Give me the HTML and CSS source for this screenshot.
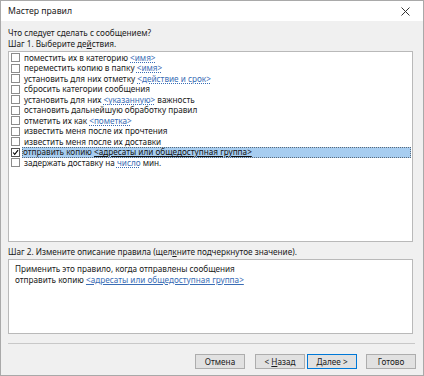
FILE: index.html
```html
<!DOCTYPE html>
<html lang="ru">
<head>
    <meta charset="UTF-8">
    <title>Мастер правил</title>
    <link rel="stylesheet" href="styles.css">
</head>
<body>

<div class="window">
    <!-- Title bar -->
    <div class="titlebar">
        <span class="title">Мастер правил</span>
        <span class="close">
            <svg width="9" height="9" viewBox="0 0 9 9"><path d="M0.5 0.5L8.5 8.5M8.5 0.5L0.5 8.5" stroke="#333" stroke-width="1"/></svg>
        </span>
    </div>

    <div class="content">
        <p class="label">Что следует сделать с сообщением?</p>
        <p class="label">Шаг 1. Выберите де<u>й</u>ствия.</p>

        <!-- Step 1 list -->
        <div class="listbox">
            <div class="row"><span class="box"></span><span class="text">поместить их в категорию <a href="#">&lt;имя&gt;</a></span></div>
            <div class="row"><span class="box"></span><span class="text">переместить копию в папку <a href="#">&lt;имя&gt;</a></span></div>
            <div class="row"><span class="box"></span><span class="text">установить для них отметку <a href="#">&lt;действие и срок&gt;</a></span></div>
            <div class="row"><span class="box"></span><span class="text">сбросить категории сообщения</span></div>
            <div class="row"><span class="box"></span><span class="text">установить для них <a href="#">&lt;указанную&gt;</a> важность</span></div>
            <div class="row"><span class="box"></span><span class="text">остановить дальнейшую обработку правил</span></div>
            <div class="row"><span class="box"></span><span class="text">отметить их как <a href="#">&lt;пометка&gt;</a></span></div>
            <div class="row"><span class="box"></span><span class="text">известить меня после их прочтения</span></div>
            <div class="row"><span class="box"></span><span class="text">известить меня после их доставки</span></div>
            <div class="row checked">
                <span class="box">
                    <svg width="9" height="9" viewBox="0 0 9 9"><path d="M1.5 4.5L3.5 7L7.8 1.5" fill="none" stroke="#000" stroke-width="1.4"/></svg>
                </span>
                <span class="text selected">отправить копию <a href="#">&lt;адресаты или общедоступная группа&gt;</a></span>
            </div>
            <div class="row"><span class="box"></span><span class="text">задержать доставку на <a href="#">число</a> мин.</span></div>
        </div>

        <p class="label step2">Шаг 2. Измените описание правила (щел<u>к</u>ните подчеркнутое значение).</p>

        <!-- Step 2 description -->
        <div class="description">
            <div>Применить это правило, когда отправлены сообщения</div>
            <div>отправить копию <a href="#">&lt;адресаты или общедоступная группа&gt;</a></div>
        </div>

        <div class="separator"></div>

        <div class="buttons">
            <button type="button" class="btn cancel">Отмена</button>
            <button type="button" class="btn back">&lt; <u>Н</u>азад</button>
            <button type="button" class="btn default"><u>Д</u>алее &gt;</button>
            <button type="button" class="btn finish">Готово</button>
        </div>
    </div>
</div>

</body>
</html>
```

FILE: styles.css
```css
html, body {
    margin: 0;
    padding: 0;
}

body {
    font-family: 'Noto Sans', 'DejaVu Sans', sans-serif;
    font-size: 8.2px;
    color: #1a1a1a;
    background-color: #f0f0f0;
}

.window {
    width: 424px;
    height: 376px;
    box-sizing: border-box;
    border: 1px solid #a9a9a9;
    background-color: #f0f0f0;
    display: flex;
    flex-direction: column;
}

.titlebar {
    height: 20px;
    flex-shrink: 0;
    background-color: white;
    display: flex;
    justify-content: space-between;
    align-items: center;
    padding: 0 13px 0 7px;
}

.titlebar .title {
    font-size: 8.7px;
    color: #222;
}

.titlebar .close {
    display: flex;
}

.content {
    padding: 7px 10px 0 7px;
    flex: 1;
    display: flex;
    flex-direction: column;
}

.label {
    margin: 0;
    height: 10.5px;
    line-height: 10.5px;
    white-space: nowrap;
}

.label u {
    text-decoration-thickness: 1px;
}

.listbox {
    margin-top: 2px;
    height: 191px;
    box-sizing: border-box;
    border: 1px solid #b9b9b9;
    background-color: white;
    padding-top: 0.5px;
}

.row {
    height: 10.5px;
    line-height: 10.5px;
    display: flex;
    align-items: center;
    white-space: nowrap;
}

.row .box {
    width: 7px;
    height: 7px;
    border: 1px solid #8c8c8c;
    background-color: white;
    margin: 0 4px 0 2px;
    flex-shrink: 0;
    display: flex;
    align-items: center;
    justify-content: center;
}

.row .box svg {
    display: block;
}

.row.checked .box {
    border-color: #555;
}

.row a, .description a {
    color: #3a6db5;
    text-decoration: underline dotted;
    text-underline-offset: 1px;
}

.row .selected {
    flex: 1;
    height: 10.5px;
    box-sizing: border-box;
    margin-left: -2px;
    padding-left: 1px;
    margin-right: 1px;
    background-color: #a7cdf0;
    outline: 1px dotted #5a6a7a;
    outline-offset: -1px;
}

.row .selected a {
    color: #111;
    text-decoration: underline solid;
}

.step2 {
    margin-top: 5px;
}

.description {
    margin-top: 1px;
    height: 75px;
    box-sizing: border-box;
    border: 1px solid #b9b9b9;
    background-color: white;
    padding: 3px 6px;
    line-height: 11px;
    white-space: nowrap;
}

.description a {
    text-decoration: underline solid;
}

.separator {
    margin-top: 9px;
    height: 1px;
    background-color: #c8c8c8;
    margin-right: -2px;
}

.buttons {
    margin-top: 10px;
    display: flex;
    justify-content: flex-end;
    margin-right: -3px;
}

.btn {
    width: 50px;
    height: 15px;
    padding: 0;
    font-family: inherit;
    font-size: 8.2px;
    color: #1a1a1a;
    background-color: #e1e1e1;
    border: 1px solid #adadad;
    margin-left: 2px;
}

.btn.cancel {
    margin-left: 0;
}

.btn.back {
    margin-left: 10px;
}

.btn.default {
    border-color: #0078d7;
}

.btn.finish {
    margin-left: 9px;
}
```
